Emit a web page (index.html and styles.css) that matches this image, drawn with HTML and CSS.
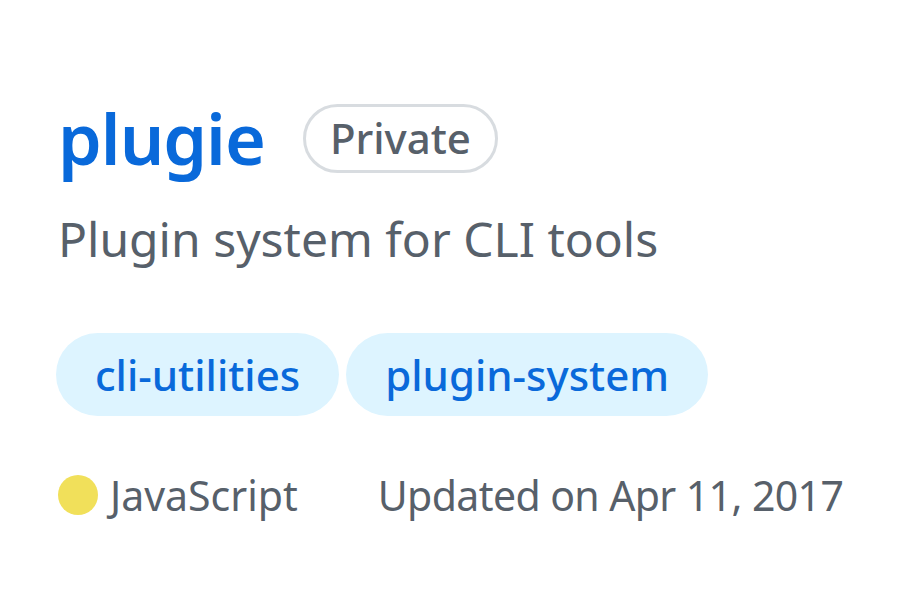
FILE: index.html
```html
<!DOCTYPE html>
<html>
<head>
<meta charset="utf-8">
<link rel="stylesheet" href="styles.css">
</head>
<body>
<div class="card">
  <div class="head">
    <a class="title">plugie</a>
    <span class="badge">Private</span>
  </div>
  <p class="desc">Plugin system for CLI tools</p>
  <div class="topics">
    <span class="topic">cli-utilities</span>
    <span class="topic">plugin-system</span>
  </div>
  <div class="meta">
    <span class="lang"><span class="dot"></span>JavaScript</span>
    <span class="updated">Updated on Apr 11, 2017</span>
  </div>
</div>
</body>
</html>
```
FILE: styles.css
```css
html, body { margin: 0; padding: 0; background: #ffffff; }
body { font-family: "Noto Sans", "Open Sans", sans-serif; }
.card { padding: 88px 0 0 58px; }
.head { display: flex; align-items: center; gap: 38px; height: 100px; }
.title { color: #0969da; font-size: 70px; font-weight: 600; line-height: 1; letter-spacing: -1px; }
.badge { color: #57606a; font-size: 42px; font-weight: 500; border: 3px solid #d8dce0; border-radius: 40px; padding: 4px 24px 5px; line-height: 54px; }
.desc { margin: 16px 0 0; color: #57606a; font-size: 48px; line-height: 70px; }
.topics { display: flex; gap: 7px; margin: 59px 0 0 -2px; }
.topic { background: #ddf4ff; color: #0969da; font-size: 42px; font-weight: 500; border-radius: 42px; padding: 0 39px; height: 83px; line-height: 83px; }
.meta { display: flex; align-items: center; gap: 80px; margin-top: 49px; color: #57606a; font-size: 41px; line-height: 60px; }
.lang { display: flex; align-items: center; gap: 12px; }
.updated { letter-spacing: -0.6px; }
.dot { width: 40px; height: 40px; border-radius: 50%; background: #f1e05a; }
```
